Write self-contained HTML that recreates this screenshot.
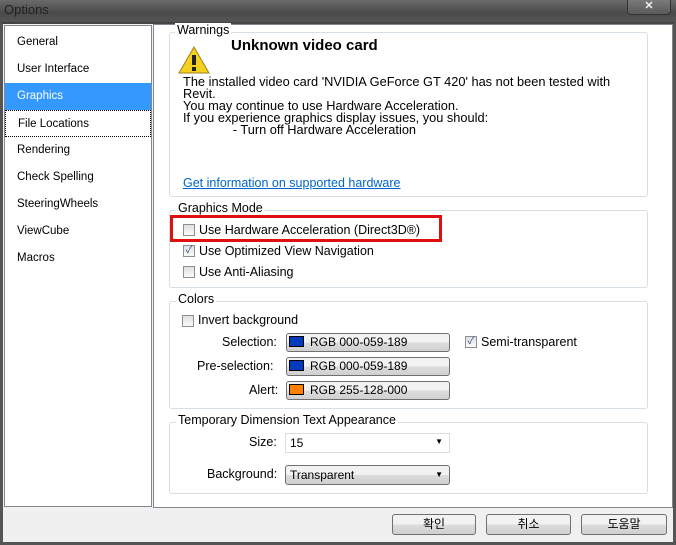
<!DOCTYPE html>
<html><head><meta charset="utf-8"><style>
*{margin:0;padding:0;box-sizing:border-box}
body{width:676px;height:545px;overflow:hidden;background:#f0f0f0;font-family:"Liberation Sans","Noto Sans CJK KR",sans-serif;font-size:12px;color:#000;position:relative}
.a{position:absolute;white-space:nowrap}
.grp{position:absolute;border:1px solid #d5dfe5;border-radius:3px}
.lg{position:absolute;background:#fff;padding:0 2px;font-size:12.5px;top:-10px;left:6px}
.cb{position:absolute;width:12px;height:12px;border:1px solid #8e8f8f;background:linear-gradient(#e0e0e0,#fafafa)}
.btn{position:absolute;border:1px solid #707070;border-radius:3px;background:linear-gradient(#f2f2f2 50%,#dcdcdc 51%,#d0d0d0);text-align:center}
.sw{display:inline-block;width:15px;height:11px;border:1px solid #000;vertical-align:-1px;margin-right:6px;margin-left:2px}
.list div{height:27px;line-height:27px;padding-left:12px;font-size:11.5px}
</style></head><body>
<div class="a" style="left:0;top:0;width:676px;height:22px;background:linear-gradient(#6a6a6a,#4a4a4a 60%,#555);"></div>
<div class="a" style="left:4px;top:2px;color:#222;font-size:13px;">Options</div>
<div class="a" style="left:627px;top:0;width:44px;height:15px;border:1px solid #333;border-top:none;border-radius:0 0 4px 4px;background:linear-gradient(#7a7a7a,#5a5a5a);color:#eee;text-align:center;font-size:11px;font-weight:bold;line-height:13px">✕</div>
<div class="a" style="left:0;top:22px;width:676px;height:523px;border:3px solid #555;border-top:2px solid #444;background:#f0f0f0"></div>
<div class="a list" style="left:4px;top:25px;width:148px;height:482px;background:#fff;border:1px solid #828790;padding-top:3px">
<div>General</div><div>User Interface</div><div style="background:#3399ff;color:#fff">Graphics</div><div style="border:1px dotted #000">File Locations</div><div>Rendering</div><div>Check Spelling</div><div>SteeringWheels</div><div>ViewCube</div><div>Macros</div></div>
<div class="a" style="left:153px;top:24px;width:520px;height:484px;background:#fff;border:1px solid #828790"></div>
<div class="grp" style="left:169px;top:32px;width:479px;height:165px"><span class="lg" style="left:5px">Warnings</span></div>
<svg class="a" style="left:178px;top:46px" width="32" height="28"><polygon points="16,1 31,27 1,27" fill="#f5d020" stroke="#a08020"/><rect x="14" y="9" width="4" height="10" fill="#222"/><rect x="14" y="21" width="4" height="4" fill="#222"/></svg>
<div class="a" style="left:231px;top:37px;font-size:15px;font-weight:bold">Unknown video card</div>
<div class="a" style="left:183px;top:76px;line-height:12px;font-size:12.8px">The installed video card 'NVIDIA GeForce GT 420' has not been tested with<br>Revit.<br>You may continue to use Hardware Acceleration.<br>If you experience graphics display issues, you should:<br>&nbsp;&nbsp;&nbsp;&nbsp;&nbsp;&nbsp;&nbsp;&nbsp;&nbsp;&nbsp;&nbsp;&nbsp;&nbsp;&nbsp;- Turn off Hardware Acceleration</div>
<div class="a" style="left:183px;top:176px;color:#0066cc;text-decoration:underline;font-size:12.5px">Get information on supported hardware</div>
<div class="grp" style="left:169px;top:210px;width:479px;height:78px"><span class="lg">Graphics Mode</span></div>
<div class="a" style="left:170px;top:215px;width:272px;height:27px;border:3px solid #e01010"></div>
<div class="cb" style="left:183px;top:224px"></div><div class="a" style="left:199px;top:223px;font-size:12.5px">Use Hardware Acceleration (Direct3D®)</div>
<div class="cb" style="left:183px;top:245px;font-size:10px;line-height:10px;color:#2a4a8a;text-align:center">✓</div><div class="a" style="left:199px;top:244px;font-size:12.5px">Use Optimized View Navigation</div>
<div class="cb" style="left:183px;top:266px"></div><div class="a" style="left:199px;top:265px;font-size:12.5px">Use Anti-Aliasing</div>
<div class="grp" style="left:169px;top:301px;width:479px;height:108px"><span class="lg">Colors</span></div>
<div class="cb" style="left:182px;top:315px"></div><div class="a" style="left:198px;top:313px;font-size:12.5px">Invert background</div>
<div class="a" style="left:222px;top:335px;font-size:12.5px">Selection:</div>
<div class="a" style="left:197px;top:359px;font-size:12.5px">Pre-selection:</div>
<div class="a" style="left:249px;top:383px;font-size:12.5px">Alert:</div>
<div class="btn" style="left:286px;top:333px;width:164px;height:19px;text-align:left;line-height:16px"><span class="sw" style="background:#003bbd"></span>RGB 000-059-189</div>
<div class="btn" style="left:286px;top:357px;width:164px;height:19px;text-align:left;line-height:16px"><span class="sw" style="background:#003bbd"></span>RGB 000-059-189</div>
<div class="btn" style="left:286px;top:381px;width:164px;height:19px;text-align:left;line-height:16px"><span class="sw" style="background:#ff8000"></span>RGB 255-128-000</div>
<div class="cb" style="left:465px;top:336px;font-size:10px;line-height:10px;color:#2a4a8a;text-align:center">✓</div><div class="a" style="left:481px;top:335px;font-size:12.5px">Semi-transparent</div>
<div class="grp" style="left:169px;top:422px;width:479px;height:72px"><span class="lg">Temporary Dimension Text Appearance</span></div>
<div class="a" style="left:249px;top:435px;font-size:12.5px">Size:</div>
<div class="a" style="left:285px;top:433px;width:165px;height:20px;border:1px solid #d5dfe5;padding:2px 4px;background:#fff">15<span style="position:absolute;right:6px;top:3px;font-size:8px">▼</span></div>
<div class="a" style="left:207px;top:467px;font-size:12.5px">Background:</div>
<div class="btn" style="left:285px;top:465px;width:165px;height:20px;text-align:left;padding:2px 4px">Transparent<span style="position:absolute;right:6px;top:4px;font-size:8px">▼</span></div>
<div class="btn" style="left:392px;top:514px;width:84px;height:21px;line-height:19px">확인</div>
<div class="btn" style="left:486px;top:514px;width:85px;height:21px;line-height:19px">취소</div>
<div class="btn" style="left:581px;top:514px;width:86px;height:21px;line-height:19px">도움말</div>
</body></html>
